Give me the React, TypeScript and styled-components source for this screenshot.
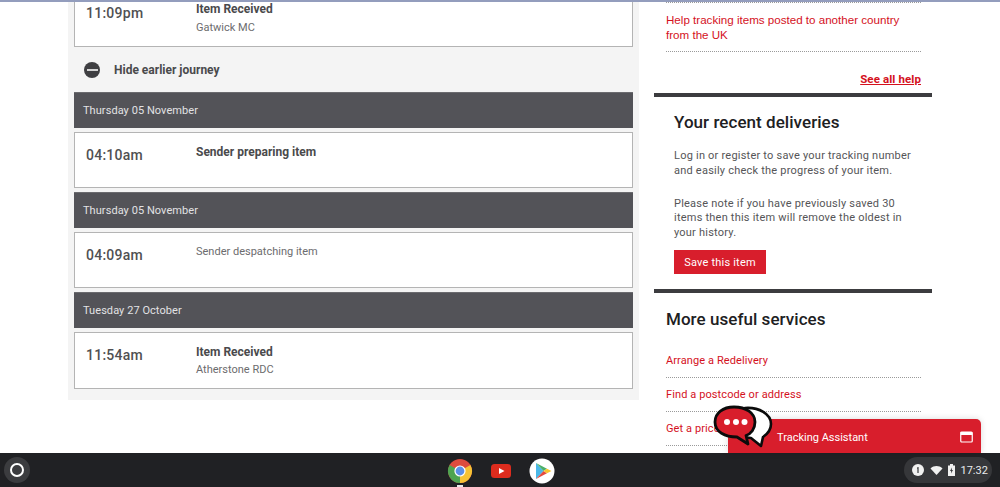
import React from "react";
import styled, { createGlobalStyle } from "styled-components";

const Global = createGlobalStyle`
  html, body { margin: 0; padding: 0; background: #fff; height: 100%; overflow: hidden; }
  * { box-sizing: border-box; }
  body { font-family: Roboto, "Liberation Sans", sans-serif; }
`;
const Screen = styled.div`position: relative; width: 1000px; height: 487px; display: flex; flex-direction: column; overflow: hidden;`;
const TopStrip = styled.div`position: relative; z-index: 1; height: 2px; background: #939dbd; flex: none;`;
const Page = styled.div`flex: 1; min-height: 0; display: flex; gap: 15px; padding-left: 68px; overflow: hidden;`;
const Left = styled.div`width: 571px; height: 398px; padding: 0 6px; background: #f4f4f4; display: flex; flex-direction: column; gap: 4px;`;
const Right = styled.div`width: 278px; display: flex; flex-direction: column;`;
const Card = styled.div<{ $h: number; $cut?: boolean }>`
  height: ${p => p.$h}px; flex: none; background: #fff; border: 1px solid #b4b4b4; border-top-width: ${p => (p.$cut ? 0 : 1)}px;
  margin-top: ${p => (p.$cut ? -1 : 0)}px; padding: ${p => (p.$cut ? 0 : 11)}px 0 0 11px; display: flex; color: #4a4a4c;
`;
const Time = styled.div<{ $cut?: boolean }>`width: 110px; flex: none; font-size: 14px; line-height: 20px; font-weight: 500; letter-spacing: .25px; color: #505052; padding-top: ${p => (p.$cut ? 2 : 1)}px;`;
const Event = styled.div<{ $gap?: number }>`display: flex; flex-direction: column; gap: ${p => p.$gap ?? 2}px;`;
const Title = styled.div`font-size: 12px; line-height: 16px; font-weight: 700; color: #4a4a4c;`;
const Sub = styled.div`font-size: 11px; line-height: 16px; color: #6c6c6e;`;
const Toggle = styled.div`height: 37px; flex: none; display: flex; align-items: center; gap: 14px; padding: 1px 0 0 10px; font-size: 12px; font-weight: 700; color: #4a4a4c;`;
const Minus = styled.span`width: 16px; height: 16px; border-radius: 50%; background: #3f3f42; display: flex; align-items: center; justify-content: center;
  &::after { content: ""; width: 11px; height: 2px; background: #d5d5d5; }`;
const DateBar = styled.div`height: 36px; flex: none; background: #535358; color: #e2e2e4; font-size: 11px; letter-spacing: .06px; display: flex; align-items: center; padding-left: 9px; border-top: 1px solid #6b6b6f;`;
const Indent = styled.div`padding: 0 11px 0 12px;`;
const Dotted = styled.div`border-bottom: 1px dotted #9a9a9a;`;
const HelpLink = styled.div`font-family: "Liberation Sans", sans-serif; font-size: 11.6px; line-height: 15px; color: #d4111d; padding: 9px 0 9px 0;`;
const SeeAll = styled.div`font-size: 11.5px; font-weight: 700; letter-spacing: .1px; line-height: 14px; color: #d4111d; text-decoration: underline; text-align: right; padding-top: 20px; height: 41px;`;
const Thick = styled.div`height: 4px; flex: none; background: #3c3c3f;`;
const Block = styled.div`padding: 14px 15px 0 20px; height: 192px;`;
const Heading = styled.h2`margin: 0; font-size: 17px; line-height: 22px; font-weight: 500; letter-spacing: .05px; color: #202022;`;
const Para = styled.p`margin: 0; font-size: 11px; line-height: 14.5px; letter-spacing: .22px; color: #555557;`;
const Paras = styled.div`display: flex; flex-direction: column; gap: 18.5px; padding-top: 16px;`;
const SaveButton = styled.div`margin-top: 10px; width: 92px; height: 24px; background: #d81e2c; color: #fff; font-size: 11px; letter-spacing: .2px; display: flex; align-items: center; justify-content: center;`;
const Services = styled.div`padding: 15px 11px 0 12px;`;
const ServiceList = styled.div`display: flex; flex-direction: column; padding-top: 14px;`;
const ServiceRow = styled(Dotted)`height: 34px; font-size: 11px; letter-spacing: .1px; color: #d4111d; padding-top: 10px; line-height: 14px;`;

const Widget = styled.div`position: absolute; left: 728px; top: 419px; width: 253px; height: 34px; background: #d81e2c; border-radius: 5px 5px 0 0; color: #fff; font-size: 11px; display: flex; align-items: center; justify-content: space-between; padding: 2px 8px 0 49px; box-shadow: 0 0 6px rgba(0,0,0,.15);`;
const Bubbles = styled.svg`position: absolute; left: 713px; top: 404px;`;
const Shelf = styled.div`position: relative; height: 34px; flex: none; background: #202124; display: flex; align-items: center; justify-content: space-between; padding: 0 8px 0 4px;`;
const Launcher = styled.div`width: 26px; height: 26px; border-radius: 50%; background: #3b3c3f; display: flex; align-items: center; justify-content: center;
  &::after { content: ""; width: 10px; height: 10px; border: 2px solid #fff; border-radius: 50%; }`;
const Apps = styled.div`position: absolute; left: 447px; top: 5px; display: flex; gap: 15px; align-items: center;`;
const Dot = styled.div`position: absolute; left: 457px; bottom: 0; width: 6px; height: 2px; background: #e8e8e8;`;
const Tray = styled.div`width: 88px; height: 26px; border-radius: 13px; background: #36373a; color: #e8eaed; font-family: Roboto, sans-serif; font-size: 11px; display: flex; align-items: center; gap: 5.5px; padding-left: 8px;`;

const Chrome = () => (
  <svg width="26" height="26" viewBox="0 0 26 26">
    <circle cx="13" cy="13" r="12" fill="#dd4b3e" />
    <path d="M13 13 L23.4 7 A12 12 0 0 1 13 25 Z" fill="#f6c235" />
    <path d="M13 13 L13 25 A12 12 0 0 1 2.6 7 Z" fill="#4ea451" />
    <circle cx="13" cy="13" r="5.6" fill="#fff" />
    <circle cx="13" cy="13" r="4.4" fill="#5b8fe8" />
  </svg>
);
const YouTube = () => (
  <svg width="26" height="26" viewBox="0 0 26 26">
    <rect x="3" y="6" width="20" height="14" rx="3.5" fill="#dd2c1e" />
    <path d="M11 10 L16.5 13 L11 16 Z" fill="#fff" />
  </svg>
);
const Play = () => (
  <svg width="26" height="26" viewBox="0 0 26 26">
    <circle cx="13" cy="13" r="12.5" fill="#fff" />
    <path d="M7 5 L14.5 13 L7 21 Z" fill="#4bb8e8" />
    <path d="M7 5 L18 10.8 L14.5 13 Z" fill="#4caf6a" />
    <path d="M7 21 L18 15.2 L14.5 13 Z" fill="#e44a3f" />
    <path d="M18 10.8 L22.5 13 L18 15.2 L14.5 13 Z" fill="#f8c52c" />
  </svg>
);

const WindowIcon = () => (
  <svg width="13" height="12" viewBox="0 0 13 12">
    <rect x=".75" y="1" width="11.5" height="10" rx="1" fill="none" stroke="#fff" strokeWidth="1.2" />
    <rect x=".75" y="1" width="11.5" height="3" fill="#fff" />
  </svg>
);

const Speech = () => (
  <Bubbles width="60" height="44" viewBox="0 0 60 44">
    <path d="M32 4 C46 3 58 10 58 20 C58 27 53 31 50 33 L48 42 L38 34 L30 33 Z" fill="#fff" stroke="#0b0b0b" strokeWidth="2.6" strokeLinejoin="round" />
    <path d="M21 3 C33 3 42 9 42 18 C42 25 38 30 33 31.5 L35 40 L24 33 C12 33 2 28 2 18 C2 9 10 3 21 3 Z" fill="#d81e2c" stroke="#0b0b0b" strokeWidth="2.8" strokeLinejoin="round" />
    <circle cx="14" cy="18" r="3" fill="#fff" />
    <circle cx="23" cy="18" r="3" fill="#fff" />
    <circle cx="31.5" cy="18" r="3" fill="#fff" />
  </Bubbles>
);

const Stop = ({ time, title, sub, strong, h = 56 }: { time: string; title: string; sub?: string; strong?: boolean; h?: number }) => (
  <Card $h={h}>
    <Time>{time}</Time>
    <Event>{strong ? <Title>{title}</Title> : <Sub>{title}</Sub>}{sub && <Sub>{sub}</Sub>}</Event>
  </Card>
);

export default function App() {
  return (
    <Screen>
      <Global />
      <TopStrip />
      <Page>
        <Left>
          <Card $h={46} $cut>
            <Time $cut>11:09pm</Time>
            <Event $gap={3}><Title>Item Received</Title><Sub>Gatwick MC</Sub></Event>
          </Card>
          <Toggle><Minus />Hide earlier journey</Toggle>
          <DateBar>Thursday 05 November</DateBar>
          <Stop time="04:10am" title="Sender preparing item" strong />
          <DateBar>Thursday 05 November</DateBar>
          <Stop time="04:09am" title="Sender despatching item" />
          <DateBar>Tuesday 27 October</DateBar>
          <Stop time="11:54am" title="Item Received" sub="Atherstone RDC" strong h={57} />
        </Left>
        <Right>
          <Indent>
            <Dotted />
            <Dotted><HelpLink>Help tracking items posted to another country from the UK</HelpLink></Dotted>
            <SeeAll>See all help</SeeAll>
          </Indent>
          <Thick />
          <Block>
            <Heading>Your recent deliveries</Heading>
            <Paras>
              <Para>Log in or register to save your tracking number and easily check the progress of your item.</Para>
              <Para>Please note if you have previously saved 30 items then this item will remove the oldest in your history.</Para>
            </Paras>
            <SaveButton>Save this item</SaveButton>
          </Block>
          <Thick />
          <Services>
            <Heading>More useful services</Heading>
            <ServiceList>
              <ServiceRow>Arrange a Redelivery</ServiceRow>
              <ServiceRow>Find a postcode or address</ServiceRow>
              <ServiceRow>Get a price</ServiceRow>
            </ServiceList>
          </Services>
        </Right>
      </Page>
      <Shelf>
        <Launcher />
        <Apps><Chrome /><YouTube /><Play /></Apps>
        <Dot />
        <Tray>
          <svg width="12" height="12" viewBox="0 0 12 12"><circle cx="6" cy="6" r="6" fill="#f1f1f1" /><path d="M5 3.4 L6.6 3 V9 H5.4 V4.4 L5 4.6 Z" fill="#36373a" /></svg>
          <svg width="13" height="11" viewBox="0 0 13 11"><path d="M.5 3.4 C4 .2 9 .2 12.5 3.4 L6.5 10 Z" fill="#f1f1f1" /></svg>
          <svg width="7" height="12" viewBox="0 0 7 12"><path d="M2 0 H5 V1.4 H7 V12 H0 V1.4 H2 Z" fill="#f1f1f1" /><path d="M4 3.4 L2 7 H3.2 L3 9.6 L5 6 H3.8 Z" fill="#36373a" /></svg>
          <span>17:32</span>
        </Tray>
      </Shelf>
      <Widget>Tracking Assistant<WindowIcon /></Widget>
      <Speech />
    </Screen>
  );
}
